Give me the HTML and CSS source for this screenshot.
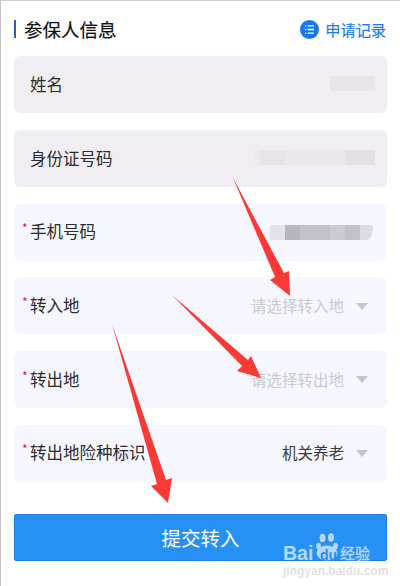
FILE: index.html
```html
<!DOCTYPE html>
<html lang="zh-CN">
<head>
    <meta charset="UTF-8">
    <meta name="viewport" content="width=device-width, initial-scale=1.0">
    <title>参保人信息</title>
    <link rel="stylesheet" href="styles.css">
</head>
<body>
    <div class="page">
        <!-- Section title -->
        <div class="title-bar">
            <h1 class="title">参保人信息</h1>
            <a class="records">
                <svg class="records-icon" width="19" height="19" viewBox="0 0 19 19">
                    <circle cx="9.5" cy="9.5" r="9.5" fill="#1677ee"/>
                    <path d="M5 5.8h1.2M7.6 5.8h6.4M5 9.5h1.2M7.6 9.5h6.4M5 13.2h1.2M7.6 13.2h6.4" stroke="#fff" stroke-width="1.3" fill="none"/>
                </svg>
                申请记录
            </a>
        </div>

        <!-- Form rows -->
        <form class="form">
            <div class="row row-locked">
                <span class="label">姓名</span>
                <span class="mask mask-name"></span>
            </div>
            <div class="row row-locked">
                <span class="label">身份证号码</span>
                <span class="mask mask-id"></span>
            </div>
            <div class="row">
                <span class="label required">手机号码</span>
                <span class="mask mask-phone"></span>
            </div>
            <div class="row">
                <span class="label required">转入地</span>
                <span class="select placeholder">请选择转入地<i class="caret"></i></span>
            </div>
            <div class="row">
                <span class="label required">转出地</span>
                <span class="select placeholder">请选择转出地<i class="caret"></i></span>
            </div>
            <div class="row">
                <span class="label required">转出地险种标识</span>
                <span class="select">机关养老<i class="caret"></i></span>
            </div>
            <button type="button" class="submit">提交转入</button>
        </form>

        <!-- Red annotation arrows drawn over the form -->
        <svg class="arrows" width="400" height="586" viewBox="0 0 400 586">
            <polygon points="233,178 284,273 289,271 290,296 270,280 275,277" fill="#fb3a36"/>
            <polygon points="172,295 248,360 251,356 261,378 237,371 242,366" fill="#fb3a36"/>
            <polygon points="112,324 166,480 172,478 168,503 151,486 157,484" fill="#fb3a36"/>
        </svg>

        <!-- Watermark -->
        <div class="watermark">
            <span class="wm-bai">Bai</span>
            <svg class="wm-paw" width="22" height="28" viewBox="0 0 22 28">
                <ellipse cx="6.5" cy="5" rx="3" ry="4.2" fill="#fff"/>
                <ellipse cx="15" cy="4.5" rx="3" ry="4.2" fill="#fff"/>
                <ellipse cx="2.5" cy="13" rx="2.4" ry="3.2" fill="#fff"/>
                <ellipse cx="19.5" cy="13" rx="2.4" ry="3.2" fill="#fff"/>
                <ellipse cx="11" cy="20" rx="10.5" ry="7.5" fill="#fff"/>
            </svg>
            <span class="wm-du">du</span>
            <span class="wm-jy">经验</span>
            <span class="wm-url">jingyan.baidu.com</span>
        </div>
    </div>
</body>
</html>
```

FILE: styles.css
```css
* {
    margin: 0;
    padding: 0;
    box-sizing: border-box;
}

html, body {
    width: 400px;
    height: 586px;
    overflow: hidden;
}

body {
    font-family: "Noto Sans CJK SC", "Liberation Sans", sans-serif;
    background-color: #fff;
    color: #2b2b2b;
}

.page {
    position: relative;
    width: 400px;
    height: 586px;
    padding: 1px 13px 0 13px;
    border-left: 1px solid #c4c2c4;
    border-top: 1px solid #cfcdcf;
}

/* Title */
.title-bar {
    display: flex;
    justify-content: space-between;
    align-items: center;
    height: 54.3px;
}

.title {
    font-size: 18.5px;
    font-weight: 400;
    line-height: 18px;
    color: #111;
    border-left: 2px solid #2c5fc4;
    padding-left: 8px;
    -webkit-text-stroke: 0.2px #111;
}

.records {
    display: flex;
    align-items: center;
    gap: 6px;
    font-size: 15.2px;
    color: #1a7cf0;
    -webkit-text-stroke: 0.2px #1a7cf0;
    margin-right: 1px;
}

/* Rows */
.form {
    display: flex;
    flex-direction: column;
    gap: 16.7px;
}

.row {
    display: flex;
    justify-content: space-between;
    align-items: center;
    height: 57px;
    padding: 0 20px 1.5px 16px;
    border-radius: 6px;
    background-color: #f6f6fe;
}

.row-locked {
    background-color: #f0eef3;
}

.label {
    position: relative;
    font-size: 16.5px;
    color: #2b2b2b;
}

.required::before {
    content: "*";
    position: absolute;
    left: -8px;
    top: 0;
    font-size: 12px;
    color: #d8215c;
}

.select {
    display: flex;
    align-items: center;
    font-size: 15.5px;
    color: #3a3a3a;
}

.placeholder {
    color: #c9c9d0;
}

.caret {
    width: 0;
    height: 0;
    margin-top: 2px;
    margin-left: 12px;
    margin-right: -1px;
    border-left: 6px solid transparent;
    border-right: 6px solid transparent;
    border-top: 7px solid #c4c4cc;
}

/* Blurred personal data */
.mask {
    display: block;
    height: 15px;
}

.mask-name {
    width: 45px;
    margin-right: -8px;
    margin-bottom: 2px;
    background-color: #e7e5e9;
}

.mask-id {
    width: 120px;
    margin-right: -8px;
    background: linear-gradient(90deg, #ebe9ed 0 5px, #e6e4e8 5px 30px, #eae8ec 30px 90px, #e2e0e4 90px 120px);
}

.mask-phone {
    width: 103px;
    margin-top: 2px;
    margin-right: -6px;
    border-top-right-radius: 4px;
    border-bottom-right-radius: 8px 15px;
    background: linear-gradient(90deg, #e2e2ea 0 15px, #b7b6bc 15px 30px, #c2c1c7 30px 60px, #cccbd1 60px 75px, #c2c1c7 75px 90px, #dcdce4 90px 103px);
}

/* Submit */
.submit {
    height: 47px;
    margin-top: 16px;
    border: 1px solid #1d80e4;
    border-radius: 2px;
    background-color: #2790f5;
    color: #fff;
    font-family: inherit;
    font-size: 19.5px;
}

/* Overlays */
.arrows {
    position: absolute;
    left: -1px;
    top: -1px;
    pointer-events: none;
}

.watermark {
    position: absolute;
    left: 281px;
    top: 531px;
    width: 95px;
    height: 44px;
    color: #fff;
}

.wm-bai,
.wm-jy,
.wm-paw {
    opacity: 0.65;
}

.wm-bai {
    position: absolute;
    left: 1px;
    top: 9px;
    font-family: "Liberation Sans", sans-serif;
    font-size: 19.5px;
    font-weight: 700;
    line-height: 24px;
}

.wm-paw {
    position: absolute;
    left: 34px;
    top: 1px;
}

.wm-du {
    position: absolute;
    left: 38px;
    top: 15px;
    font-family: "Liberation Sans", sans-serif;
    font-size: 14px;
    font-weight: 700;
    line-height: 16px;
    color: #2a8cf0;
}

.wm-jy {
    position: absolute;
    left: 58px;
    top: 9px;
    font-size: 15px;
    line-height: 24px;
    -webkit-text-stroke: 0.3px #fff;
}

.wm-url {
    position: absolute;
    left: 1px;
    top: 32px;
    font-family: "Liberation Sans", sans-serif;
    font-size: 12px;
    font-weight: 700;
    line-height: 14px;
    color: #e2e2e2;
}
```
